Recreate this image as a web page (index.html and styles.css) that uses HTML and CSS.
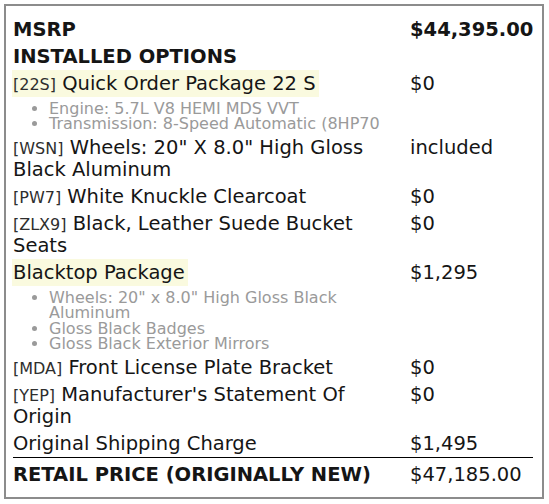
FILE: index.html
```html
<!DOCTYPE html>
<html lang="en">
<head>
<meta charset="utf-8">
<title>Window Sticker</title>
<link rel="stylesheet" href="styles.css">
</head>
<body>
<div class="sticker">
  <div class="row head">
    <div class="label">MSRP</div>
    <div class="value">$44,395.00</div>
  </div>
  <div class="row head">
    <div class="label">INSTALLED OPTIONS</div>
    <div class="value"></div>
  </div>
  <div class="row">
    <div class="label">
      <span class="hl"><span class="code">[22S]</span> Quick Order Package 22 S</span>
      <ul class="features">
        <li>Engine: 5.7L V8 HEMI MDS VVT</li>
        <li>Transmission: 8-Speed Automatic (8HP70</li>
      </ul>
    </div>
    <div class="value">$0</div>
  </div>
  <div class="row">
    <div class="label"><span class="code">[WSN]</span> Wheels: 20" X 8.0" High Gloss Black Aluminum</div>
    <div class="value">included</div>
  </div>
  <div class="row">
    <div class="label"><span class="code">[PW7]</span> White Knuckle Clearcoat</div>
    <div class="value">$0</div>
  </div>
  <div class="row">
    <div class="label"><span class="code">[ZLX9]</span> Black, Leather Suede Bucket Seats</div>
    <div class="value">$0</div>
  </div>
  <div class="row">
    <div class="label">
      <span class="hl">Blacktop Package</span>
      <ul class="features">
        <li>Wheels: 20" x 8.0" High Gloss Black Aluminum</li>
        <li>Gloss Black Badges</li>
        <li>Gloss Black Exterior Mirrors</li>
      </ul>
    </div>
    <div class="value">$1,295</div>
  </div>
  <div class="row">
    <div class="label"><span class="code">[MDA]</span> Front License Plate Bracket</div>
    <div class="value">$0</div>
  </div>
  <div class="row">
    <div class="label"><span class="code">[YEP]</span> Manufacturer's Statement Of Origin</div>
    <div class="value">$0</div>
  </div>
  <div class="row">
    <div class="label">Original Shipping Charge</div>
    <div class="value">$1,495</div>
  </div>
  <div class="row total">
    <div class="label">RETAIL PRICE (ORIGINALLY NEW)</div>
    <div class="value">$47,185.00</div>
  </div>
</div>
</body>
</html>
```

FILE: styles.css
```css
html, body {
  margin: 0;
  padding: 0;
  background: #ffffff;
}

body {
  font-family: "DejaVu Sans", "Liberation Sans", sans-serif;
  color: #151515;
}

.sticker {
  box-sizing: border-box;
  width: 540px;
  margin: 4px 0 0 4px;
  padding: 10px 9px 8px 7px;
  border: 2px solid #8c8c8c;
}

.row {
  display: grid;
  grid-template-columns: 397px 1fr;
  padding: 2.5px 0;
  font-size: 19.5px;
  line-height: 22px;
}

.label {
  padding-right: 10px;
}

.head .label,
.head .value {
  font-weight: bold;
}

.code {
  font-size: 16px;
  line-height: 1;
  color: #2e2e2e;
}

.hl {
  background: #fafadf;
  padding: 2px 3px 2px 1px;
  margin-left: -1px;
}

.features {
  margin: 6px 0 0 0;
  padding: 0 0 0 36px;
  font-size: 16px;
  line-height: 15.5px;
  color: #9a9a9a;
  list-style: disc;
}

.total {
  border-top: 1px solid #000000;
  padding-top: 6px;
}

.total .label {
  font-weight: bold;
}
```
